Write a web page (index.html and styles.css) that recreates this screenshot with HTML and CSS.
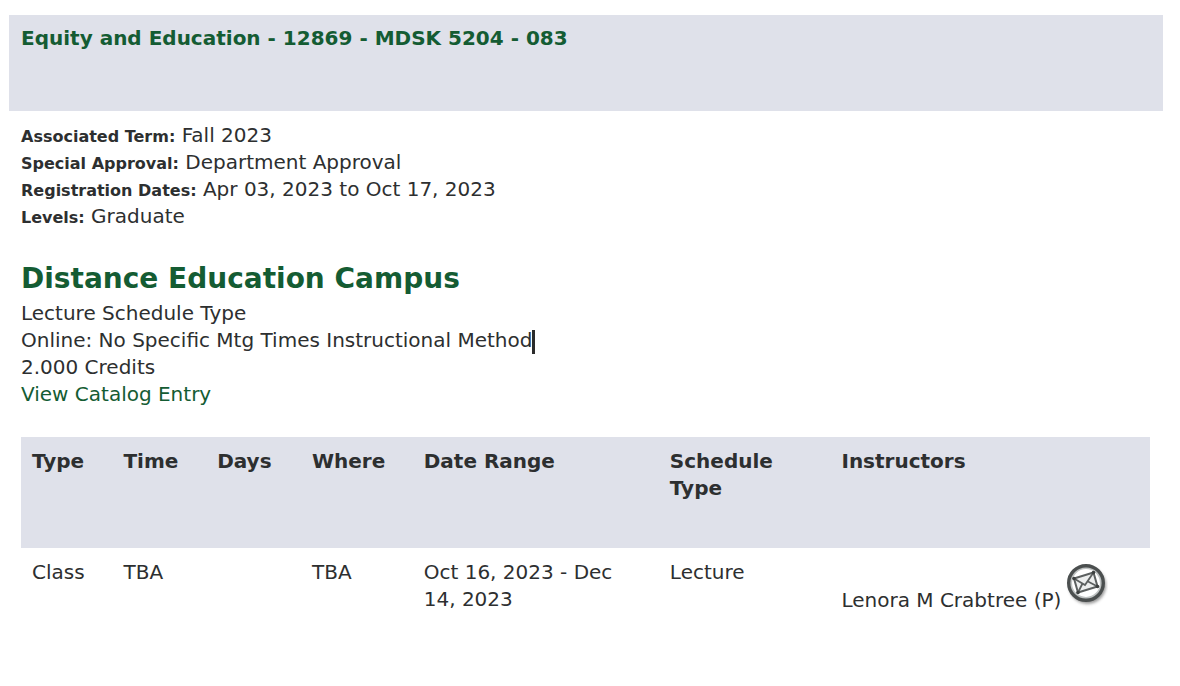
FILE: index.html
```html
<!DOCTYPE html>
<html lang="en">
<head>
<meta charset="utf-8">
<title>Class Schedule Listing</title>
<link rel="stylesheet" href="styles.css">
</head>
<body>
<main class="page">
  <h1 class="course-bar"><a href="#course">Equity and Education - 12869 - MDSK 5204 - 083</a></h1>
  <section class="details">
    <p class="line"><b class="label">Associated Term:</b> Fall 2023</p>
    <p class="line"><b class="label">Special Approval:</b> Department Approval</p>
    <p class="line"><b class="label">Registration Dates:</b> Apr 03, 2023 to Oct 17, 2023</p>
    <p class="line"><b class="label">Levels:</b> Graduate</p>
    <h2 class="campus">Distance Education Campus</h2>
    <p class="line">Lecture Schedule Type</p>
    <p class="line">Online: No Specific Mtg Times Instructional Method<span class="caret"></span></p>
    <p class="line">2.000 Credits</p>
    <p class="line"><a href="#catalog">View Catalog Entry</a></p>
    <table class="meetings">
      <colgroup>
        <col class="col-type"><col class="col-time"><col class="col-days"><col class="col-where"><col class="col-range"><col class="col-schedule"><col>
      </colgroup>
      <thead>
        <tr><th scope="col">Type</th><th scope="col">Time</th><th scope="col">Days</th><th scope="col">Where</th><th scope="col">Date Range</th><th scope="col">Schedule Type</th><th scope="col">Instructors</th></tr>
      </thead>
      <tbody>
        <tr>
          <td>Class</td><td>TBA</td><td></td><td>TBA</td><td>Oct 16, 2023 - Dec 14, 2023</td><td>Lecture</td>
          <td><div class="instructor"><span>Lenora M Crabtree (P)</span><a class="mail" href="#mail" aria-label="Email instructor">
            <svg width="42" height="44" viewBox="-20 -20 42 44">
              <defs>
                <filter id="shadow" x="-30%" y="-30%" width="160%" height="160%"><feGaussianBlur stdDeviation="1.5"/></filter>
                <filter id="soft" x="-20%" y="-20%" width="140%" height="140%"><feGaussianBlur stdDeviation="0.7"/></filter>
              </defs>
              <circle cx="1.5" cy="2.5" r="18.5" fill="#777" opacity="0.75" filter="url(#shadow)"/>
              <circle r="17" fill="#fff"/>
              <g filter="url(#soft)">
                <circle r="15.2" fill="none" stroke="#bfc3c3" stroke-width="2.5"/>
                <circle r="17.3" fill="none" stroke="#4c5050" stroke-width="3.4"/>
                <path d="M-12-4.5L7.5-10.5L11.5 3.5L-8 9.5Z" fill="#eceeee" stroke="#5c6060" stroke-width="2" stroke-linejoin="round"/>
                <path d="M-12-4.5L-1 2L7.5-10.5M-8 9.5L-3.5 0.5M11.5 3.5L2-1.5" fill="none" stroke="#5c6060" stroke-width="1.8"/>
                <g fill="#3c4040"><circle cx="-12" cy="-4.5" r="1.8"/><circle cx="7.5" cy="-10.5" r="1.8"/><circle cx="11.5" cy="3.5" r="1.8"/><circle cx="-8" cy="9.5" r="1.8"/></g>
              </g>
            </svg></a></div></td>
        </tr>
      </tbody>
    </table>
  </section>
</main>
</body>
</html>
```

FILE: styles.css
```css
* { box-sizing: border-box; }
body {
  margin: 0;
  background: #fff;
  color: #2d2f30;
  font-family: Verdana, "DejaVu Sans", sans-serif;
  font-size: 20px;
  line-height: 27px;
}
a { color: #145c33; text-decoration: none; }
.page { padding: 15px 17px 0 9px; }
.course-bar {
  margin: 0;
  min-height: 96px;
  padding: 10px 12px;
  background: #dfe1ea;
  font-size: 20px;
}
.details { padding: 11px 13px 11px 12px; }
.line { margin: 0; }
.label { font-size: 16px; line-height: 1; }
.campus {
  margin: 31px 0 3px;
  color: #145c33;
  font-size: 28px;
  line-height: 36px;
}
.caret {
  display: inline-block;
  width: 3px;
  height: 24px;
  background: #2b2b2b;
  vertical-align: middle;
}
.meetings {
  width: 100%;
  margin-top: 29px;
  border-collapse: collapse;
  table-layout: fixed;
}
.meetings th, .meetings td {
  padding: 11px;
  text-align: left;
  vertical-align: top;
}
.meetings th { height: 111px; background: #dfe1ea; }
.col-type { width: 8.1%; }
.col-time { width: 8.3%; }
.col-days { width: 8.4%; }
.col-where { width: 9.9%; }
.col-range { width: 21.8%; }
.col-schedule { width: 15.2%; }
.meetings td:nth-child(5) { padding-right: 24px; }
.instructor {
  display: flex;
  align-items: flex-end;
  gap: 5px;
  padding-top: 4px;
  white-space: nowrap;
}
.mail { display: flex; padding-bottom: 7px; }
```
